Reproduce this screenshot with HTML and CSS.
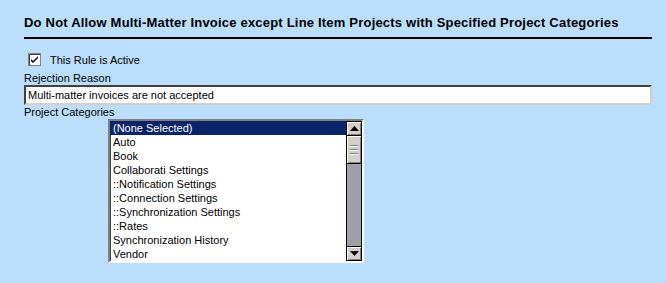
FILE: index.html
```html
<!DOCTYPE html>
<html>
<head>
<link rel="stylesheet" href="styles.css">
</head>
<body>
<div class="rule">
  <h1 class="rule-title">Do Not Allow Multi-Matter Invoice except Line Item Projects with Specified Project Categories</h1>

  <div class="check-row">
    <span class="checkbox">
      <svg width="13" height="13" viewBox="0 0 13 13">
        <rect x="0.5" y="0.5" width="12" height="12" fill="#fff" stroke="#808080"/>
        <path d="M1.5 12 V1.5 H12" fill="none" stroke="#404040"/>
        <path d="M3 6 L5 8 L10 3 V5 L5 10 L3 8 Z" fill="#000"/>
      </svg>
    </span>
    <span>This Rule is Active</span>
  </div>

  <div class="field-label">Rejection Reason</div>
  <div class="textbox">Multi-matter invoices are not accepted</div>

  <div class="field-label">Project Categories</div>
  <div class="listbox">
    <ul class="options">
      <li class="selected">(None Selected)</li>
      <li>Auto</li>
      <li>Book</li>
      <li>Collaborati Settings</li>
      <li>::Notification Settings</li>
      <li>::Connection Settings</li>
      <li>::Synchronization Settings</li>
      <li>::Rates</li>
      <li>Synchronization History</li>
      <li>Vendor</li>
    </ul>
    <div class="scrollbar">
      <div class="sb-btn">
        <svg width="9" height="5" viewBox="0 0 9 5"><path d="M0 5 L4.5 0 L9 5 Z" fill="#000"/></svg>
      </div>
      <div class="sb-thumb">
        <span></span><span></span><span></span>
      </div>
      <div class="sb-track"></div>
      <div class="sb-btn">
        <svg width="9" height="5" viewBox="0 0 9 5"><path d="M0 0 L9 0 L4.5 5 Z" fill="#000"/></svg>
      </div>
    </div>
  </div>
</div>
</body>
</html>
```

FILE: styles.css
```css
body {
  margin: 0;
  background-color: #bbdefc;
  font-family: "Liberation Sans", Arial, sans-serif;
  font-size: 11px;
  line-height: 14px;
  color: #000;
}

.rule {
  padding: 15px 0 0 24px;
  width: 628px;
}

.rule-title {
  margin: 0;
  padding-bottom: 7px;
  font-size: 13px;
  line-height: 15px;
  letter-spacing: 0.2px;
  font-weight: bold;
  white-space: nowrap;
  border-bottom: 2px solid #000;
}

.check-row {
  display: flex;
  align-items: center;
  margin: 14px 0 4px 4px;
  height: 14px;
}

.checkbox {
  display: flex;
  width: 13px;
  height: 13px;
  margin-right: 9px;
  margin-top: -2px;
}

.textbox {
  height: 14px;
  padding: 1px 2px;
  border: 2px solid;
  border-color: #404040 #d4d0c8 #d4d0c8 #404040;
  background: #fff;
  white-space: nowrap;
}

.listbox {
  display: flex;
  width: 252px;
  height: 140px;
  margin-left: 84px;
  border: 2px solid;
  border-color: #808080 #ffffff #ffffff #808080;
  box-shadow: inset 1px 1px 0 #404040;
  background: #fff;
}

.options {
  flex: 1;
  margin: 0;
  padding: 0;
  list-style: none;
}

.options li {
  height: 14px;
  padding-left: 3px;
  white-space: nowrap;
}

.options li.selected {
  background: #0a246a;
  color: #fff;
}

.scrollbar {
  display: flex;
  flex-direction: column;
  width: 16px;
  background: #9ca0a8;
}

.sb-btn {
  display: flex;
  align-items: center;
  justify-content: center;
  height: 13px;
  border: 1px solid #000;
  background: #d4d0c8;
  box-shadow: inset 1px 1px 0 #fff, inset -1px -1px 0 #808080;
}

.sb-thumb {
  display: flex;
  flex-direction: column;
  justify-content: center;
  align-items: center;
  gap: 2px;
  height: 27px;
  border: 1px solid #000;
  border-top: none;
  background: #d4d0c8;
  box-shadow: inset 1px 1px 0 #fff, inset -1px -1px 0 #808080;
}

.sb-thumb span {
  width: 8px;
  height: 1px;
  background: #808080;
  border-bottom: 1px solid #fff;
}

.sb-track {
  flex: 1;
  border-left: 1px solid #000;
  border-right: 1px solid #000;
}
```
